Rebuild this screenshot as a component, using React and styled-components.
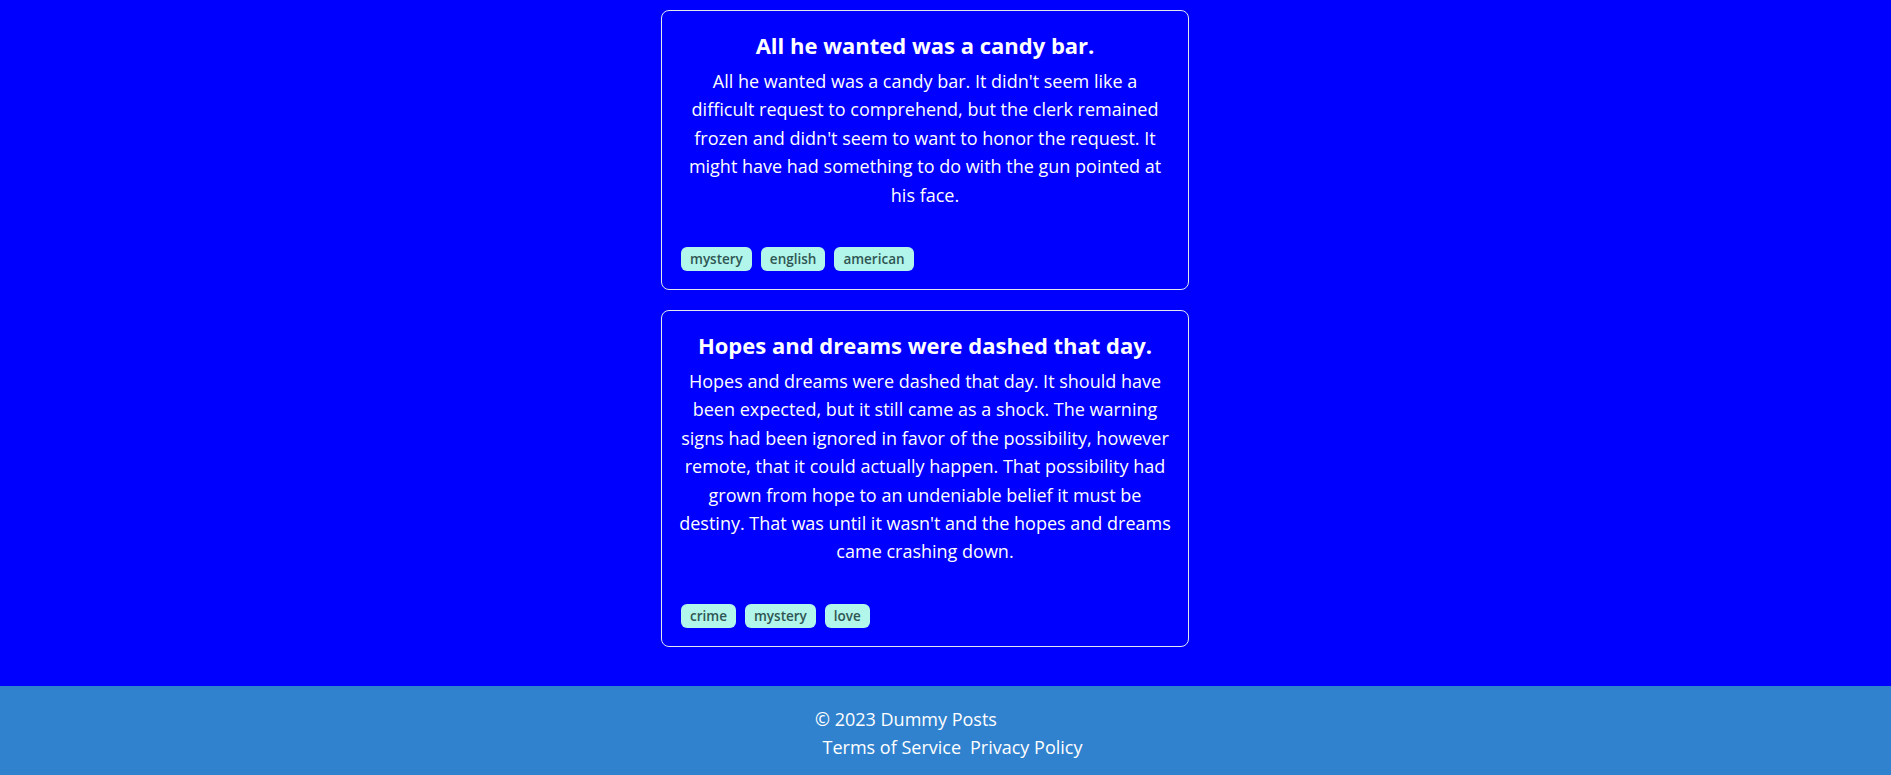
import React from "react";
import styled, { createGlobalStyle } from "styled-components";

const GlobalStyle = createGlobalStyle`
  body {
    margin: 0;
    background: #0000ff;
    font-family: "Open Sans", "Noto Sans", sans-serif;
    color: #ffffff;
  }
`;

const Page = styled.div`
  display: flex;
  flex-direction: column;
  min-height: 100vh;
`;

const Main = styled.main`
  display: flex;
  flex-direction: column;
  align-items: center;
  gap: 20px;
  padding: 10px 0 39px;
`;

const Card = styled.article`
  box-sizing: border-box;
  width: 528px;
  margin-right: 41px;
  padding: 20px 19px 18px;
  border: 1px solid #e2e8f0;
  border-radius: 8px;
  text-align: center;
`;

const Title = styled.h2`
  margin: 0 0 8px;
  font-size: 22px;
  line-height: 28px;
  font-weight: 700;
`;

/* text column is a hair wider than the tags row so lines break like the original */
const Body = styled.p`
  margin: 0 -1.875px 38px;
  font-size: 18px;
  line-height: 28.4px;
`;

const Tags = styled.div`
  display: flex;
  gap: 9px;
`;

const Tag = styled.span`
  display: inline-block;
  padding: 0 9px;
  height: 24px;
  line-height: 24px;
  border-radius: 6px;
  background: #b2f5ea;
  color: #2f5553;
  font-size: 13.5px;
  font-weight: 600;
`;

const Footer = styled.footer`
  background: #3182ce;
  padding: 19px 0 14px;
  display: flex;
  flex-direction: column;
  align-items: center;
  font-size: 18px;
  line-height: 28.4px;
`;

const Copy = styled.p`
  margin: 0 79px 0 0;
`;

const Links = styled.nav`
  display: flex;
  gap: 9px;
  margin-left: 14px;
`;

const FooterLink = styled.a`
  color: #ffffff;
  text-decoration: none;
`;

const posts = [
  {
    id: 1,
    title: "All he wanted was a candy bar.",
    body:
      "All he wanted was a candy bar. It didn't seem like a difficult request to comprehend, but the clerk remained frozen and didn't seem to want to honor the request. It might have had something to do with the gun pointed at his face.",
    tags: ["mystery", "english", "american"],
  },
  {
    id: 2,
    title: "Hopes and dreams were dashed that day.",
    body:
      "Hopes and dreams were dashed that day. It should have been expected, but it still came as a shock. The warning signs had been ignored in favor of the possibility, however remote, that it could actually happen. That possibility had grown from hope to an undeniable belief it must be destiny. That was until it wasn't and the hopes and dreams came crashing down.",
    tags: ["crime", "mystery", "love"],
  },
];

const App = () => {
  return (
    <Page>
      <GlobalStyle />
      <Main>
        {posts.map((post) => (
          <Card key={post.id}>
            <Title>{post.title}</Title>
            <Body>{post.body}</Body>
            <Tags>
              {post.tags.map((tag) => (
                <Tag key={tag}>{tag}</Tag>
              ))}
            </Tags>
          </Card>
        ))}
      </Main>
      <Footer>
        <Copy>© 2023 Dummy Posts</Copy>
        <Links>
          <FooterLink href="#">Terms of Service</FooterLink>
          <FooterLink href="#">Privacy Policy</FooterLink>
        </Links>
      </Footer>
    </Page>
  );
};

export default App;
